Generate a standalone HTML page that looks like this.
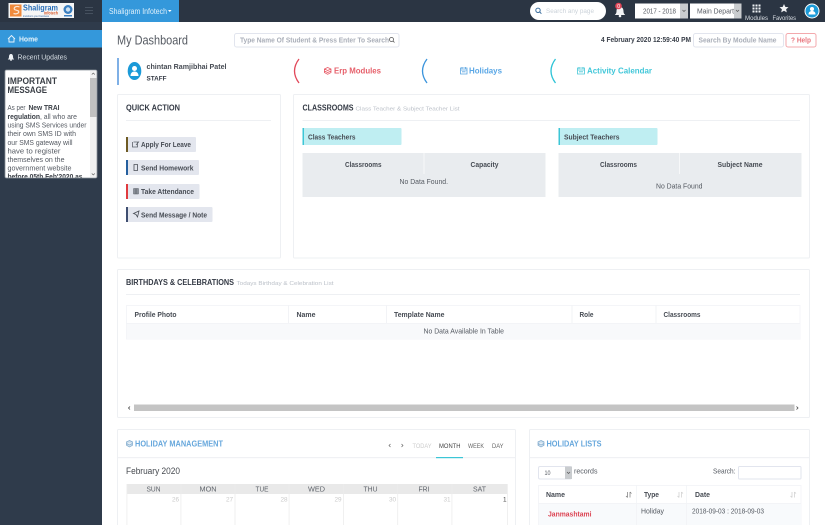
<!DOCTYPE html>
<html lang="en"><head><meta charset="utf-8"><title>My Dashboard</title>
<style>
html,body{margin:0;padding:0;width:825px;height:525px;overflow:hidden;background:#fff}
svg{display:block}
text{font-family:"Liberation Sans",sans-serif;font-size:7.4px;fill:#555a62;white-space:pre}
.b{font-weight:700;fill:#474c54}
.h{font-weight:700;fill:#343a45;font-size:8px}
.sub{font-size:5.8px;fill:#bcc1c9}
.ph{fill:#a9aeb8;font-weight:700;font-size:7.2px}
.cal{fill:#5f646b;font-size:7.4px}
.n{font-size:6.4px;fill:#cacaca}
.icon{fill:none;stroke-width:.8}
</style></head><body>
<svg width="825" height="525" viewBox="0 0 825 525" xmlns="http://www.w3.org/2000/svg">
<!-- sidebar and header -->
<rect width="825" height="525" fill="#fff"/>
<rect width="102" height="525" fill="#2f3b4b"/>
<rect width="825" height="22" fill="#2b3543"/>
<rect x="102" width="77" height="22" fill="#3498db"/>
<text x="109" y="14" textLength="58" lengthAdjust="spacingAndGlyphs" style="fill:#dff0fb;font-size:7.8px">Shaligram Infotech</text>
<path d="M168 10h3.600l-1.800 2z" fill="#fff"/>
<!-- logo -->
<rect x="8.500" y="3" width="65.500" height="15" fill="#f6f6f6"/>
<rect x="10" y="4.500" width="11.500" height="12" fill="#f08a3c"/>
<path d="M19.500 7c-3.500-1.500-6 .5-5 2.500l4 1.500c1 2-1.500 3.500-5 2.500" fill="none" stroke="#fbe6d4" stroke-width="1.200"/>
<text x="23" y="10.500" textLength="35" lengthAdjust="spacingAndGlyphs" style="fill:#2a6fb8;font-size:8.500px;font-weight:700">Shaligram</text>
<text x="44" y="14.500" textLength="14" lengthAdjust="spacingAndGlyphs" style="fill:#d95a2b;font-size:4.500px;font-weight:700">Infotech</text>
<text x="23" y="17" textLength="26" lengthAdjust="spacingAndGlyphs" style="fill:#2d5f9a;font-size:3px">transform your business</text>
<circle cx="68" cy="9.500" r="4.500" fill="#3b7fc0"/><circle cx="68" cy="9.500" r="2.200" fill="#cfe2f2"/>
<rect x="64" y="15" width="8" height="1.500" fill="#3b7fc0"/>
<path d="M85 7.500h8M85 10.500h8M85 13.500h8" stroke="#46515f" stroke-width="1"/>
<!-- sidebar nav -->
<rect y="30" width="102" height="17.500" fill="#3498db"/>
<path d="M8 39l3.500-3.500 3.500 3.500M9 38.500v3.500h5v-3.500" fill="none" stroke="#e8f4fc" stroke-width=".9"/>
<text x="19" y="41.500" textLength="19" lengthAdjust="spacingAndGlyphs" style="fill:#e6f3fb;font-size:7.400px;font-weight:700">Home</text>
<path d="M11 54c-1.500 0-2 1.300-2 2.800 0 1.500-.6 2-1.200 2.700h6.400c-.6-.7-1.200-1.200-1.200-2.700 0-1.500-.5-2.800-2-2.800z" fill="#eef2f5"/><circle cx="11" cy="60" r=".9" fill="#eef2f5"/>
<text x="17.500" y="59.500" textLength="49.500" lengthAdjust="spacingAndGlyphs" style="fill:#d5dce3;font-size:7.400px">Recent Updates</text>
<!-- message box -->
<rect x="5" y="70" width="92" height="108" rx="1.500" fill="#fff" stroke="#8b929a" stroke-width=".8"/>
<rect x="90" y="71" width="6.500" height="106" fill="#f1f1f1"/>
<rect x="90" y="78" width="6.500" height="39" fill="#c1c1c1"/>
<path d="M91.800 74.500l1.500-1.500 1.500 1.500M91.800 173.500l1.500 1.500 1.500-1.500" fill="none" stroke="#555" stroke-width=".6"/>
<text x="7.500" y="84" textLength="49.500" lengthAdjust="spacingAndGlyphs" style="fill:#3a3f46;font-size:8.800px;font-weight:700">IMPORTANT</text>
<text x="7.500" y="93" textLength="39.500" lengthAdjust="spacingAndGlyphs" style="fill:#3a3f46;font-size:8.800px;font-weight:700">MESSAGE</text>
<text x="7.500" y="110" textLength="18" lengthAdjust="spacingAndGlyphs">As per</text>
<text x="28.500" y="110" textLength="31" lengthAdjust="spacingAndGlyphs" class="b" style="fill:#3a3f46">New TRAI</text>
<text x="7.500" y="119" textLength="32.500" lengthAdjust="spacingAndGlyphs" class="b" style="fill:#3a3f46">regulation</text>
<text x="40" y="119" textLength="37" lengthAdjust="spacingAndGlyphs">, all who are</text>
<text x="7.500" y="127.500" textLength="79" lengthAdjust="spacingAndGlyphs">using SMS Services under</text>
<text x="7.500" y="136" textLength="68.500" lengthAdjust="spacingAndGlyphs">their own SMS ID with</text>
<text x="7.500" y="145" textLength="65" lengthAdjust="spacingAndGlyphs">our SMS gateway will</text>
<text x="7.500" y="153.500" textLength="53" lengthAdjust="spacingAndGlyphs">have to register</text>
<text x="7.500" y="162" textLength="57" lengthAdjust="spacingAndGlyphs">themselves on the</text>
<text x="7.500" y="170.500" textLength="64" lengthAdjust="spacingAndGlyphs">government website</text>
<clipPath id="mc"><rect x="5" y="70" width="85" height="107.500"/></clipPath>
<text x="7.500" y="179" textLength="75" lengthAdjust="spacingAndGlyphs" class="b" clip-path="url(#mc)" style="fill:#3a3f46">before 05th Feb'2020 as</text>

<!-- top right -->
<rect x="530" y="2" width="76" height="18" rx="9" fill="#fff"/>
<circle cx="538" cy="10.300" r="2.200" fill="none" stroke="#3c6f9e" stroke-width="1"/><path d="M539.700 12l1.700 1.700" stroke="#3c6f9e" stroke-width="1"/>
<text x="546" y="13" textLength="48" lengthAdjust="spacingAndGlyphs" style="fill:#ccd3da;font-size:6.800px">Search any page</text>
<path d="M620 7c-2.500 0-3.500 2-3.500 4.300 0 2.200-.9 2.800-1.700 3.700h10.400c-.8-.9-1.700-1.500-1.700-3.700C623.500 9 622.500 7 620 7z" fill="#f2f3f5"/><circle cx="620" cy="16" r="1.300" fill="#f2f3f5"/>
<circle cx="618.500" cy="6" r="3.300" fill="#e2485a"/><text x="617.300" y="8" style="fill:#fff;font-size:5px">0</text>
<rect x="635" y="3.500" width="45" height="15" fill="#fff"/><rect x="680" y="3.500" width="8" height="15" fill="#c9cccf"/>
<text x="643" y="13.500" textLength="33" lengthAdjust="spacingAndGlyphs">2017 - 2018</text>
<path d="M682.500 10l1.500 1.500 1.500-1.500" fill="none" stroke="#555" stroke-width=".7"/>
<rect x="690" y="3.500" width="44" height="15" fill="#fff"/><rect x="734" y="3.500" width="7.500" height="15" fill="#c9cccf"/>
<text x="697" y="13.500" textLength="37" lengthAdjust="spacingAndGlyphs">Main Depart</text>
<path d="M736 10l1.500 1.500 1.500-1.500" fill="none" stroke="#555" stroke-width=".7"/>
<g fill="#eef1f4"><rect x="752.500" y="4.500" width="2" height="2"/><rect x="755.500" y="4.500" width="2" height="2"/><rect x="758.500" y="4.500" width="2" height="2"/><rect x="752.500" y="7.500" width="2" height="2"/><rect x="755.500" y="7.500" width="2" height="2"/><rect x="758.500" y="7.500" width="2" height="2"/><rect x="752.500" y="10.500" width="2" height="2"/><rect x="755.500" y="10.500" width="2" height="2"/><rect x="758.500" y="10.500" width="2" height="2"/></g>
<text x="745" y="20" textLength="23" lengthAdjust="spacingAndGlyphs" style="fill:#d8dde3;font-size:6.200px">Modules</text>
<path d="M784 4l1.300 2.900 3.200.3-2.400 2.100.7 3.100-2.800-1.600-2.800 1.600.7-3.100-2.400-2.100 3.200-.3z" fill="#f2f3f5"/>
<text x="772.500" y="20" textLength="23.500" lengthAdjust="spacingAndGlyphs" style="fill:#d8dde3;font-size:6.200px">Favorites</text>
<circle cx="812" cy="11" r="7" fill="#1b9ad8" stroke="#fff" stroke-width="1"/><circle cx="812" cy="9" r="2" fill="#fff"/><path d="M808.500 14.500c0-2.500 1.500-3.500 3.500-3.500s3.500 1 3.500 3.500z" fill="#fff"/>

<!-- title row -->
<text x="117" y="44.500" textLength="71" lengthAdjust="spacingAndGlyphs" style="fill:#555a62;font-size:12.500px">My Dashboard</text>
<rect x="234.500" y="33.500" width="164.500" height="13.500" rx="2" fill="#fff" stroke="#e2e5ee"/>
<text x="240" y="42.500" textLength="149" lengthAdjust="spacingAndGlyphs" class="ph">Type Name Of Student &amp; Press Enter To Search</text>
<circle cx="391.500" cy="39.500" r="2" fill="none" stroke="#555" stroke-width=".8"/><path d="M393 41l1.500 1.500" stroke="#555" stroke-width=".8"/>
<text x="601" y="42" textLength="90" lengthAdjust="spacingAndGlyphs" class="b" style="fill:#3a404a">4 February 2020 12:59:40 PM</text>
<rect x="693.500" y="33.500" width="90" height="13.500" rx="2" fill="#fff" stroke="#e2e5ee"/>
<text x="698.500" y="42.500" textLength="78" lengthAdjust="spacingAndGlyphs" class="ph">Search By Module Name</text>
<rect x="786" y="33.500" width="30" height="13.500" rx="2" fill="#fff" stroke="#f3a9ad"/>
<text x="791" y="42.500" textLength="20" lengthAdjust="spacingAndGlyphs" class="b" style="fill:#e8747c">? Help</text>

<!-- user + shortcuts -->
<rect x="117" y="58" width="2" height="27" fill="#7fb0e6"/>
<ellipse cx="134.500" cy="71" rx="6.800" ry="9" fill="#1b9ad8"/><circle cx="134.500" cy="68.500" r="2.500" fill="#fff"/><path d="M130.500 76c0-3 1.800-4.500 4-4.500s4 1.500 4 4.500z" fill="#fff"/>
<text x="146.500" y="69" textLength="80" lengthAdjust="spacingAndGlyphs" class="b">chintan Ramjibhai Patel</text>
<text x="146.500" y="80.500" textLength="20" lengthAdjust="spacingAndGlyphs" class="b" style="fill:#343a45;font-size:6.800px">STAFF</text>
<path d="M299 59c-6 8-6 16 0 24" fill="none" stroke="#e2485a" stroke-width="1.300"/>
<path d="M427 59c-6 8-6 16 0 24" fill="none" stroke="#3b94dc" stroke-width="1.300"/>
<path d="M555.500 59c-6 8-6 16 0 24" fill="none" stroke="#2dc3d6" stroke-width="1.300"/>
<path d="M327.700 67.500l3.300 1.500v3.500l-3.300 1.800-3.300-1.800V69zM324.400 69l3.300 1.500 3.300-1.500M324.400 71l3.300 1.500 3.300-1.500" class="icon" stroke="#e8606c"/>
<text x="334" y="73.500" textLength="47" lengthAdjust="spacingAndGlyphs" style="fill:#e65f6a;font-size:8.600px;font-weight:700">Erp Modules</text>
<path d="M460.500 68h6.500v6h-6.500zM460.500 70h6.500M462 67v2M465.500 67v2M462 71.800h3.500" class="icon" stroke="#5aa5e2"/>
<text x="469" y="73.500" textLength="33" lengthAdjust="spacingAndGlyphs" style="fill:#5aa7e6;font-size:8.600px;font-weight:700">Holidays</text>
<path d="M577.500 68h7v6h-7zM577.500 70h7M579 67v2M583 67v2M579 71.800h4" class="icon" stroke="#48c8d8"/>
<text x="587" y="73.500" textLength="65" lengthAdjust="spacingAndGlyphs" style="fill:#42c7d9;font-size:8.600px;font-weight:700">Activity Calendar</text>

<!-- quick action -->
<rect x="117.500" y="94.500" width="163" height="163.500" rx="1" fill="#fff" stroke="#eef0f3"/>
<text x="126" y="110.500" textLength="54" lengthAdjust="spacingAndGlyphs" class="h">QUICK ACTION</text>
<rect x="126" y="120" width="145" height="1" fill="#eef0f3"/>
<rect x="126" y="137" width="70" height="15" rx="1" fill="#e3e6ee"/><rect x="126" y="137" width="2" height="15" fill="#6e5a24"/>
<rect x="126" y="160" width="73" height="15" rx="1" fill="#e3e6ee"/><rect x="126" y="160" width="2" height="15" fill="#255f9e"/>
<rect x="126" y="184" width="73.500" height="15" rx="1" fill="#e3e6ee"/><rect x="126" y="184" width="2" height="15" fill="#e03a3e"/>
<rect x="126" y="207" width="86.500" height="15" rx="1" fill="#e3e6ee"/><rect x="126" y="207" width="2" height="15" fill="#3f4e70"/>
<path d="M133.500 142h4v5h-5v-5M136 145l3-3.500" class="icon" stroke="#5a6068"/>
<path d="M134 164.500h3.500v6H134z" class="icon" stroke="#4a4f57"/>
<path d="M133.500 188.500h2.500v5.500h-2.500zM136 188.500h2.500v5.500H136z" fill="#8a8f98" stroke="#5a6068" stroke-width=".5"/>
<path d="M133.500 213.500l5.500-2.500-1.500 6-1.500-2.500z" class="icon" stroke="#4a4f57"/>
<text x="141" y="147" textLength="50" lengthAdjust="spacingAndGlyphs" class="b">Apply For Leave</text>
<text x="141" y="170.500" textLength="52.500" lengthAdjust="spacingAndGlyphs" class="b">Send Homework</text>
<text x="141" y="193.800" textLength="53" lengthAdjust="spacingAndGlyphs" class="b">Take Attendance</text>
<text x="141" y="217.300" textLength="66" lengthAdjust="spacingAndGlyphs" class="b">Send Message / Note</text>

<!-- classrooms -->
<rect x="293.500" y="94.500" width="516" height="163.500" rx="1" fill="#fff" stroke="#eef0f3"/>
<text x="302.500" y="110.500" textLength="51" lengthAdjust="spacingAndGlyphs" class="h">CLASSROOMS</text>
<text x="355.500" y="110.300" textLength="104" lengthAdjust="spacingAndGlyphs" class="sub">Class Teacher &amp; Subject Teacher List</text>
<rect x="302.500" y="120" width="497.500" height="1" fill="#eef0f3"/>
<rect x="302.500" y="128" width="99" height="17" rx="1" fill="#bfeef2"/><rect x="302.500" y="128" width="1.500" height="17" fill="#3cc6d6"/>
<rect x="558.500" y="128" width="99" height="17" rx="1" fill="#bfeef2"/><rect x="558.500" y="128" width="1.500" height="17" fill="#3cc6d6"/>
<text x="308" y="139.500" textLength="47.500" lengthAdjust="spacingAndGlyphs" class="b">Class Teachers</text>
<text x="564" y="139.500" textLength="55.500" lengthAdjust="spacingAndGlyphs" class="b">Subject Teachers</text>
<rect x="302.500" y="153" width="243" height="44" fill="#e9ecef"/><rect x="423.500" y="153" width="1" height="21" fill="#f7f8f9"/>
<rect x="558.500" y="153" width="243" height="44" fill="#e9ecef"/><rect x="679" y="153" width="1" height="21" fill="#f7f8f9"/>
<text x="345" y="166.800" textLength="36.500" lengthAdjust="spacingAndGlyphs" class="b">Classrooms</text>
<text x="470.500" y="166.800" textLength="28" lengthAdjust="spacingAndGlyphs" class="b">Capacity</text>
<text x="600" y="166.800" textLength="37" lengthAdjust="spacingAndGlyphs" class="b">Classrooms</text>
<text x="717.500" y="166.800" textLength="45" lengthAdjust="spacingAndGlyphs" class="b">Subject Name</text>
<text x="399.500" y="184" textLength="48.500" lengthAdjust="spacingAndGlyphs">No Data Found.</text>
<text x="656" y="188.500" textLength="46.500" lengthAdjust="spacingAndGlyphs">No Data Found</text>

<!-- birthdays -->
<rect x="117.500" y="269.500" width="692" height="148" rx="1" fill="#fff" stroke="#eef0f3"/>
<text x="126" y="285" textLength="108" lengthAdjust="spacingAndGlyphs" class="h">BIRTHDAYS &amp; CELEBRATIONS</text>
<text x="236.500" y="285" textLength="97" lengthAdjust="spacingAndGlyphs" class="sub">Todays Birthday &amp; Celebration List</text>
<rect x="126" y="294" width="674" height="1" fill="#eef0f3"/>
<rect x="126.500" y="305.500" width="673.500" height="33.500" fill="#fff" stroke="#f4f5f8"/>
<rect x="127" y="323" width="673" height="16" fill="#f8f9fb"/>
<rect x="126" y="323" width="674" height=".8" fill="#f2f3f6"/>
<g fill="#f2f3f6"><rect x="288" y="305" width="1" height="18"/><rect x="386" y="305" width="1" height="18"/><rect x="571.500" y="305" width="1" height="18"/><rect x="655.500" y="305" width="1" height="18"/></g>
<text x="134.500" y="316.800" textLength="42" lengthAdjust="spacingAndGlyphs" class="b">Profile Photo</text>
<text x="296.500" y="316.800" textLength="19" lengthAdjust="spacingAndGlyphs" class="b">Name</text>
<text x="394" y="316.800" textLength="50.500" lengthAdjust="spacingAndGlyphs" class="b">Template Name</text>
<text x="579.500" y="316.800" textLength="14" lengthAdjust="spacingAndGlyphs" class="b">Role</text>
<text x="663.500" y="316.800" textLength="37" lengthAdjust="spacingAndGlyphs" class="b">Classrooms</text>
<text x="423.500" y="333.500" textLength="80.500" lengthAdjust="spacingAndGlyphs">No Data Available In Table</text>
<rect x="134" y="404.500" width="660.500" height="6.500" fill="#c4c4c4"/>
<path d="M130 406.500l-1.500 1.500 1.500 1.500M796.500 406.500l1.500 1.500-1.500 1.500" fill="none" stroke="#444" stroke-width=".8"/>

<!-- holiday management -->
<rect x="117.500" y="429.500" width="398" height="110" rx="1" fill="#fff" stroke="#eef0f3"/>
<rect x="118" y="457" width="397" height="1.200" fill="#f0f1f4"/>
<path d="M129.500 440.500l3 1.400v3.400l-3 1.700-3-1.700v-3.400zM126.500 443.500l3 1.400 3-1.400" fill="#cfe0ee" stroke="#7ea9cc" stroke-width=".7"/>
<text x="135" y="446.300" textLength="88" lengthAdjust="spacingAndGlyphs" style="fill:#66a7dc;font-size:8px;font-weight:700">HOLIDAY MANAGEMENT</text>
<path d="M390.500 444l-1.500 1.500 1.500 1.500M401.500 444l1.500 1.500-1.500 1.500" fill="none" stroke="#666" stroke-width=".7"/>
<text x="412.500" y="448" textLength="19" lengthAdjust="spacingAndGlyphs" style="fill:#ccc;font-size:6.300px">TODAY</text>
<text x="439" y="448" textLength="21.500" lengthAdjust="spacingAndGlyphs" style="fill:#444;font-size:6.300px">MONTH</text>
<text x="468" y="448" textLength="16" lengthAdjust="spacingAndGlyphs" style="fill:#666;font-size:6.300px">WEEK</text>
<text x="492" y="448" textLength="11.500" lengthAdjust="spacingAndGlyphs" style="fill:#666;font-size:6.300px">DAY</text>
<rect x="436" y="457" width="27" height="1.200" fill="#3cc6d6"/>
<text x="126" y="474" textLength="54" lengthAdjust="spacingAndGlyphs" style="fill:#45494f;font-size:8.800px">February 2020</text>
<rect x="126.500" y="484" width="381" height="41" fill="#fff"/>
<rect x="126.500" y="484" width="381" height="10" fill="#e9e9e9"/>
<g fill="#ececec"><rect x="126.500" y="484" width=".8" height="41"/><rect x="180.500" y="484" width=".8" height="41"/><rect x="234.600" y="484" width=".8" height="41"/><rect x="288.700" y="484" width=".8" height="41"/><rect x="343" y="484" width=".8" height="41"/><rect x="397.300" y="484" width=".8" height="41"/><rect x="451.500" y="484" width=".8" height="41"/><rect x="507" y="484" width=".8" height="41"/></g>
<text x="146.500" y="491.500" textLength="14" lengthAdjust="spacingAndGlyphs" class="cal">SUN</text>
<text x="199.500" y="491.500" textLength="17" lengthAdjust="spacingAndGlyphs" class="cal">MON</text>
<text x="255.500" y="491.500" textLength="13" lengthAdjust="spacingAndGlyphs" class="cal">TUE</text>
<text x="308" y="491.500" textLength="17" lengthAdjust="spacingAndGlyphs" class="cal">WED</text>
<text x="363.500" y="491.500" textLength="14" lengthAdjust="spacingAndGlyphs" class="cal">THU</text>
<text x="418.500" y="491.500" textLength="11" lengthAdjust="spacingAndGlyphs" class="cal">FRI</text>
<text x="473" y="491.500" textLength="13" lengthAdjust="spacingAndGlyphs" class="cal">SAT</text>
<text x="172" y="501.500" class="n">26</text><text x="226" y="501.500" class="n">27</text><text x="280.500" y="501.500" class="n">28</text><text x="334.500" y="501.500" class="n">29</text><text x="389" y="501.500" class="n">30</text><text x="443.500" y="501.500" class="n">31</text><text x="503" y="501.500" class="n" style="fill:#444">1</text>

<!-- holiday lists -->
<rect x="529.500" y="429.500" width="280" height="110" rx="1" fill="#fff" stroke="#eef0f3"/>
<rect x="530" y="457" width="279" height="1.200" fill="#f0f1f4"/>
<path d="M541 440.500l3 1.400v3.400l-3 1.700-3-1.700v-3.400zM538 443.500l3 1.400 3-1.400" fill="#cfe0ee" stroke="#7ea9cc" stroke-width=".7"/>
<text x="546.500" y="446.300" textLength="55" lengthAdjust="spacingAndGlyphs" style="fill:#66a7dc;font-size:8px;font-weight:700">HOLIDAY LISTS</text>
<rect x="538.500" y="466.500" width="33" height="12.500" rx="1.500" fill="#fff" stroke="#e2e5ee"/>
<rect x="565" y="466.500" width="7" height="12.500" fill="#c9cccf"/>
<path d="M567 472l1.500 1.500 1.500-1.500" fill="none" stroke="#555" stroke-width=".7"/>
<text x="544.500" y="474.800" textLength="6" lengthAdjust="spacingAndGlyphs" style="font-size:6.200px">10</text>
<text x="574" y="473.500" textLength="23.500" lengthAdjust="spacingAndGlyphs">records</text>
<text x="713" y="473.500" textLength="22.500" lengthAdjust="spacingAndGlyphs">Search:</text>
<rect x="738.500" y="466.500" width="62.500" height="12.500" rx="1" fill="#fff" stroke="#e2e5ee"/>
<rect x="538.500" y="485.500" width="262.500" height="40" fill="#fff" stroke="#f4f5f8"/>
<rect x="539" y="503.500" width="262" height="22" fill="#f8fafc"/>
<rect x="538.500" y="503" width="262.500" height=".8" fill="#f2f3f6"/>
<rect x="636" y="485" width=".8" height="40" fill="#f2f3f6"/><rect x="686" y="485" width=".8" height="40" fill="#f2f3f6"/>
<text x="546" y="497" textLength="19" lengthAdjust="spacingAndGlyphs" class="b">Name</text>
<text x="644" y="497" textLength="15" lengthAdjust="spacingAndGlyphs" class="b">Type</text>
<text x="695" y="497" textLength="15" lengthAdjust="spacingAndGlyphs" class="b">Date</text>
<path d="M627.500 492v5.500M626 496l1.500 1.500M630 492v5.500M630 492l1.500 1.500" fill="none" stroke="#777" stroke-width=".7"/>
<path d="M679 492v5.500M677.500 496l1.500 1.500M681.500 492v5.500M681.500 492l1.500 1.500" fill="none" stroke="#ccc" stroke-width=".7"/>
<path d="M792 492v5.500M790.500 496l1.500 1.500M794.500 492v5.500M794.500 492l1.500 1.500" fill="none" stroke="#ccc" stroke-width=".7"/>
<text x="548" y="516.500" textLength="43.500" lengthAdjust="spacingAndGlyphs" style="fill:#dc4453;font-size:7.400px;font-weight:700">Janmashtami</text>
<text x="641" y="513.500" textLength="23" lengthAdjust="spacingAndGlyphs">Holiday</text>
<text x="692" y="513.500" textLength="72" lengthAdjust="spacingAndGlyphs">2018-09-03 : 2018-09-03</text>
</svg>
</body></html>
